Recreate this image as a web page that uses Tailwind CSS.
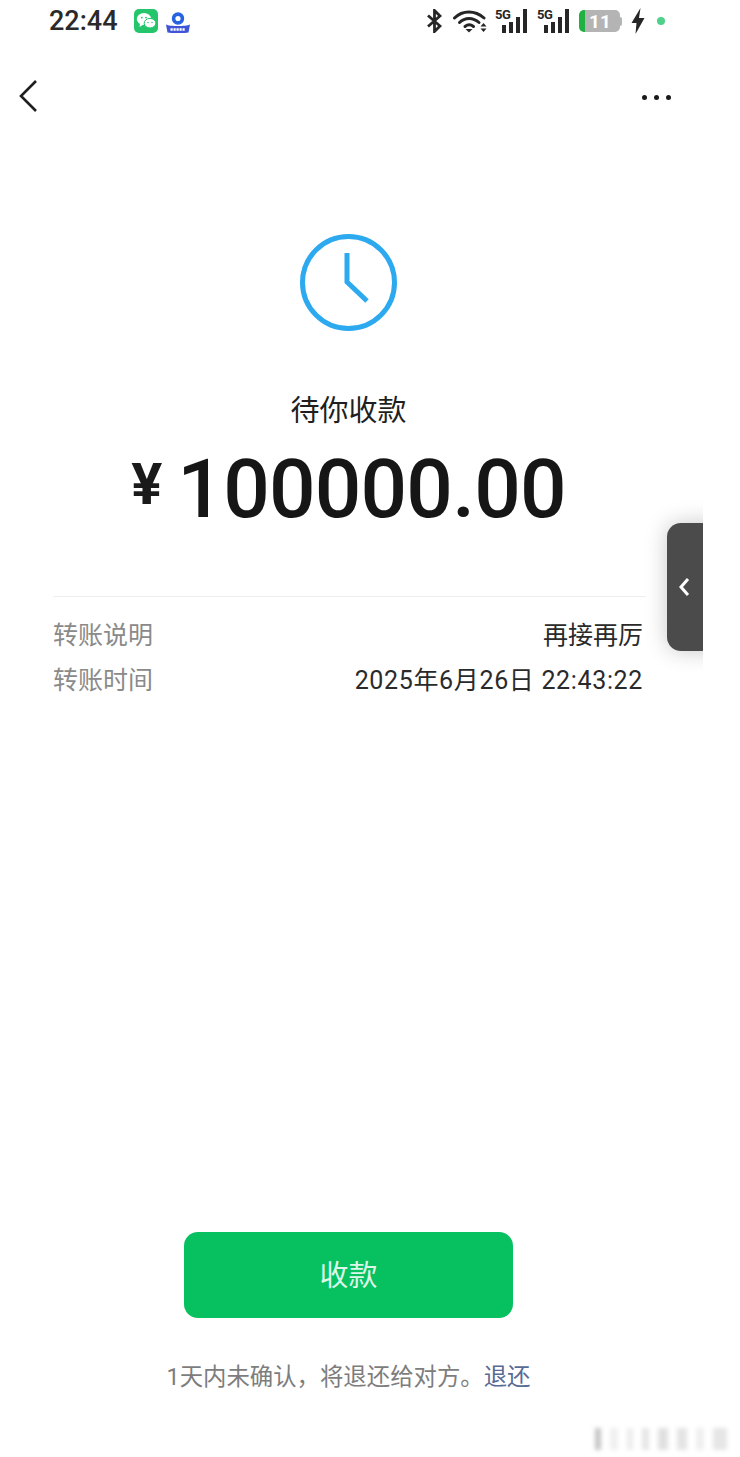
<!DOCTYPE html>
<html lang="zh-CN">
<head>
  <meta charset="UTF-8">
  <meta name="viewport" content="width=device-width, initial-scale=1.0">
  <title>待你收款</title>
  <script src="https://cdn.jsdelivr.net/npm/@tailwindcss/browser@4"></script>
</head>
<body class="bg-white">
  <div class="relative w-[740px] h-[1457px] overflow-hidden bg-white font-['Roboto','Noto_Sans_CJK_SC',sans-serif] text-[#1a1a1a]">

    <!-- Status bar -->
    <div class="flex items-center h-[42px] pl-[49px] pr-[75px]">
      <span class="text-[27px] font-medium leading-none text-[#2a2a2a] w-[85px]">22:44</span>
      <svg class="w-[24px] h-[24px]" viewBox="0 0 24 24">
        <rect width="24" height="24" rx="5" fill="#25c56c"/>
        <ellipse cx="10" cy="10" rx="7.2" ry="6" fill="#fff"/>
        <path d="M6 14.5 5.5 18 9.5 15.5Z" fill="#fff"/>
        <ellipse cx="16" cy="14.2" rx="5.8" ry="4.8" fill="#fff" stroke="#25c56c" stroke-width="1"/>
        <circle cx="7.8" cy="8.6" r=".9" fill="#25c56c"/><circle cx="12" cy="8.6" r=".9" fill="#25c56c"/>
        <circle cx="14" cy="13.5" r=".7" fill="#25c56c"/><circle cx="18" cy="13.5" r=".7" fill="#25c56c"/>
      </svg>
      <svg class="w-[24px] h-[24px] ml-[8px]" viewBox="0 0 24 24">
        <circle cx="12" cy="9.5" r="4.4" fill="none" stroke="#2563e0" stroke-width="3.6"/>
        <path d="M0 15.5C4 17.5 20 17.5 24 15.5L22.5 23.5C17 24.5 7 24.5 1.5 23.5Z" fill="#3f54d6"/>
        <path d="M4.5 20.5H19.5" stroke="#fff" stroke-width="2.4" stroke-dasharray="2.2 .8"/>
      </svg>
      <div class="flex items-center ml-auto">
        <svg class="w-[15px] h-[24px]" viewBox="0 0 15 24" fill="none" stroke="#262626" stroke-width="2.8">
          <path d="M1 6.5 13 17 7.5 22.5V1.5L13 7 1 17.5"/>
        </svg>
        <svg class="w-[34px] h-[24px] ml-[11px]" viewBox="0 0 34 24" fill="none" stroke="#262626" stroke-width="3" stroke-linecap="round">
          <path d="M1.5 9C9.5 1 22 1 31 9"/>
          <path d="M6.5 13.5C12 8 20 8 26 13.5"/>
          <path d="M12 17.5C14.5 15.5 18 15.5 20.5 17.5"/>
          <path d="M12.5 20 16 23.5 19.5 20Z" fill="#262626" stroke="none"/>
          <path d="M27.5 17.5H33.5L30.5 14Z M27.5 19.5H33.5L30.5 23Z" fill="#262626" stroke="none"/>
        </svg>
        <div class="relative w-[32px] h-[24px] ml-[8px]">
          <span class="absolute left-0 -top-[1px] text-[13px] font-bold leading-[13px] tracking-[-0.5px] text-[#262626]">5G</span>
          <svg class="absolute inset-0 w-[32px] h-[24px]" viewBox="0 0 32 24" fill="#262626">
            <rect x="7" y="16" width="4" height="8"/><rect x="14" y="13" width="4" height="11"/>
            <rect x="21" y="8" width="4" height="16"/><rect x="28" y="0" width="4" height="24"/>
          </svg>
        </div>
        <div class="relative w-[32px] h-[24px] ml-[10px]">
          <span class="absolute left-0 -top-[1px] text-[13px] font-bold leading-[13px] tracking-[-0.5px] text-[#262626]">5G</span>
          <svg class="absolute inset-0 w-[32px] h-[24px]" viewBox="0 0 32 24" fill="#262626">
            <rect x="7" y="16" width="4" height="8"/><rect x="14" y="13" width="4" height="11"/>
            <rect x="21" y="8" width="4" height="16"/><rect x="28" y="0" width="4" height="24"/>
          </svg>
        </div>
        <div class="flex items-center ml-[10px]">
          <div class="flex items-center justify-center w-[41px] h-[22px] rounded-[5px] overflow-hidden bg-[#b4b4b4] border-l-[6px] border-[#1fb141]">
            <span class="text-[19px] font-bold leading-none text-white -ml-[5px]">11</span>
          </div>
          <div class="w-[2px] h-[9px] bg-[#b4b4b4] rounded-r-sm"></div>
        </div>
        <svg class="w-[14px] h-[26px] ml-[9px]" viewBox="0 0 14 26" fill="#262626">
          <path d="M9.5 0 0.5 15H5.5L4.5 26 13.5 10H8Z"/>
        </svg>
        <div class="w-[8px] h-[8px] rounded-full bg-[#4fd18b] ml-[12px]"></div>
      </div>
    </div>

    <!-- Main column -->
    <div class="flex flex-col w-[697px] h-[1415px]">
      <!-- Nav -->
      <div class="flex items-center justify-between h-[108px] pl-[19px] pr-[26px]">
        <svg class="w-[18px] h-[32px]" viewBox="0 0 18 32" fill="none" stroke="#1f1f1f" stroke-width="2.6">
          <path d="M17 1 2 16 17 31"/>
        </svg>
        <div class="flex gap-[7px] mt-[3px]">
          <div class="w-[5px] h-[5px] rounded-full bg-[#1a1a1a]"></div>
          <div class="w-[5px] h-[5px] rounded-full bg-[#1a1a1a]"></div>
          <div class="w-[5px] h-[5px] rounded-full bg-[#1a1a1a]"></div>
        </div>
      </div>

      <!-- Clock -->
      <div class="flex justify-center mt-[84px]">
        <svg class="w-[97px] h-[97px]" viewBox="0 0 97 97" fill="none" stroke="#2ca9ef" stroke-width="5">
          <circle cx="48.5" cy="48.5" r="46"/>
          <path d="M47 19V48L67 67"/>
        </svg>
      </div>

      <div class="text-center text-[29px] leading-[40px] mt-[60px] text-[#1f1f1f]">待你收款</div>

      <div class="flex justify-center items-center mt-[16px] h-[84px]">
        <span class="text-[58px] font-bold leading-none mr-[15px] -mt-[10px]">¥</span>
        <span class="text-[82px] font-medium leading-none tracking-[-0.8px] text-[#161616]">100000.00</span>
      </div>

      <!-- Details -->
      <div class="ml-[53px] mr-[51px] mt-[65px] border-t border-[#eeeeee] pt-[16px] pr-[3px] text-[25px]">
        <div class="flex justify-between h-[45px] items-center">
          <span class="text-[#8a8a8a]">转账说明</span>
          <span class="text-[#2a2a2a]">再接再厉</span>
        </div>
        <div class="flex justify-between h-[45px] items-center">
          <span class="text-[#8a8a8a]">转账时间</span>
          <span class="text-[#2a2a2a] tracking-[0.65px]">2025年6月26日 22:43:22</span>
        </div>
      </div>

      <!-- Footer actions -->
      <div class="mt-auto flex flex-col items-center pb-[63px]">
        <button class="w-[329px] h-[86px] pt-[3px] rounded-[14px] bg-[#07c160] text-[29px] text-[#dcf7e8]">收款</button>
        <p class="mt-[42px] text-[23.4px] leading-[34px] text-[#7d7d7d]">1天内未确认，将退还给对方。<span class="text-[#576b95]">退还</span></p>
      </div>
    </div>

    <!-- Floating side tab, clipped on its right edge -->
    <div class="absolute left-[620px] top-[480px] w-[83px] h-[220px] overflow-hidden">
      <div class="absolute left-[47px] top-[43px] w-[60px] h-[128px] rounded-l-[14px] bg-[#4b4b4b] shadow-[0_0_22px_rgba(0,0,0,0.22)]">
        <svg class="absolute left-[11px] top-[54px] w-[12px] h-[20px]" viewBox="0 0 12 20" fill="none" stroke="#fff" stroke-width="3">
          <path d="M10 2 3 10 10 18"/>
        </svg>
      </div>
    </div>

    <!-- Blurred-out watermark -->
    <div class="absolute left-[595px] top-[1428px] w-[138px] h-[22px] flex gap-[9px] blur-[2px]">
      <div class="w-[6px] bg-[#c4c4c4]"></div>
      <div class="w-[8px] bg-[#f0f0f0]"></div>
      <div class="w-[6px] bg-[#ececec]"></div>
      <div class="w-[7px] bg-[#e6e6e6]"></div>
      <div class="w-[10px] bg-[#e0e0e0]"></div>
      <div class="w-[10px] bg-[#e4e4e4]"></div>
      <div class="w-[8px] bg-[#efefef]"></div>
      <div class="w-[14px] bg-[#e6e6e6]"></div>
    </div>
  </div>
</body>
</html>
